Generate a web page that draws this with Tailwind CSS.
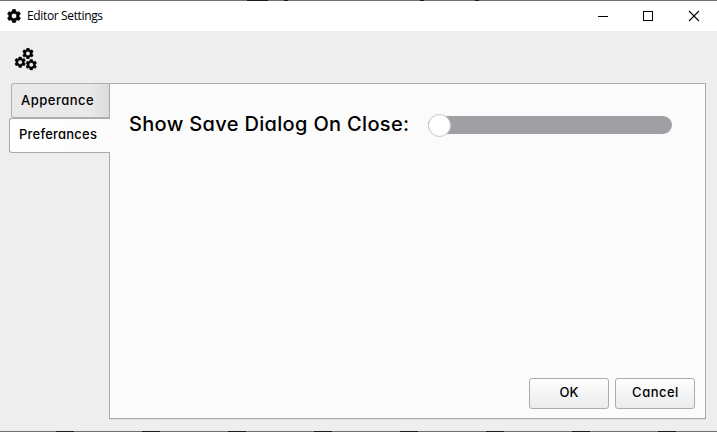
<!DOCTYPE html>
<html lang="en">
<head>
<meta charset="utf-8">
<title>Editor Settings</title>
<script src="https://cdn.jsdelivr.net/npm/@tailwindcss/browser@4"></script>
</head>
<body class="w-[717px] h-[432px] overflow-hidden bg-[#eeeeee] text-black font-['Inter','Liberation_Sans',sans-serif] [font-feature-settings:'cv11']">
<svg class="hidden"><defs>
  <symbol id="gear" viewBox="0 0 24 24"><path fill-rule="evenodd" stroke="currentColor" stroke-width="1.2" stroke-linejoin="round" fill="currentColor" d="M9.500 1h5l.7 3.200 2.200 1.300 3.200-1 2.400 4.200-2.400 2.200v2.200l2.400 2.200-2.400 4.200-3.200-1-2.200 1.300-.7 3.200h-5l-.7-3.200-2.200-1.300-3.200 1L1 15.300l2.400-2.200v-2.200L1 8.700l2.400-4.200 3.200 1 2.200-1.300zM12 7.300a4.700 4.700 0 1 0 0 9.400 4.700 4.700 0 0 0 0-9.400z"/></symbol>
</defs></svg>
<div class="flex flex-col w-full h-full">
  <div class="h-px shrink-0 flex bg-[#707070]">
    <span class="w-[21px] h-px bg-[#201a1c] ml-[247px]"></span><span class="w-1 h-px bg-[#201a1c] ml-4"></span><span class="w-1 h-px bg-[#201a1c] ml-[132px]"></span><span class="w-1 h-px bg-[#201a1c] ml-[51px]"></span>
  </div>
  <header class="h-[30px] shrink-0 bg-white flex items-center">
    <svg class="w-[14px] h-[14px] ml-[7px] -mt-px overflow-visible"><use href="#gear"/></svg>
    <span class="ml-[6px] text-[12px] leading-4 tracking-[-0.36px] font-['Open_Sans',sans-serif]">Editor Settings</span>
    <div class="ml-auto flex items-center mr-[17px] gap-[34px]">
      <svg class="w-3 h-3" fill="none" stroke="#000" shape-rendering="crispEdges"><path d="M1 6.500h10"/></svg>
      <svg class="w-3 h-3 -ml-px" fill="none" stroke="#000" shape-rendering="crispEdges"><path d="M1.500 1.500h9v9h-9z"/></svg>
      <svg class="w-3 h-3" fill="none" stroke="#000" stroke-width="1.1"><path d="M1 1l10 10M11 1l-10 10"/></svg>
    </div>
  </header>
  <div class="h-[52px] shrink-0 pt-4 pl-[14px]">
    <svg class="w-6 h-6" viewBox="0 0 24 24"><use href="#gear" x="8.200" y="0.700" width="11.500" height="11.500"/><use href="#gear" x="0.400" y="9.400" width="11.500" height="11.500"/><use href="#gear" x="11.500" y="12" width="11.500" height="11.500"/></svg>
  </div>
  <main class="h-[336px] shrink-0 flex pr-[11px]">
    <nav class="w-[109px] shrink-0 flex flex-col items-end text-[13px] font-medium">
      <div class="w-[98px] h-[35px] border border-r-0 border-[#b0b0b0] rounded-l-[3px] bg-linear-to-r from-[#e9e9e9] from-80% to-[#dcdcdc] pl-[9px] leading-[33px]"><span class="tracking-[0.5px]">Apperance</span></div>
      <div class="relative w-[101px] -mr-px h-[35px] border border-r-0 border-[#a9a9a9] rounded-l-[3px] bg-linear-to-r from-white to-[#fbfbfb] pl-[9px] leading-[31px]"><span class="tracking-[0.22px]">Preferances</span></div>
    </nav>
    <section class="w-[597px] border border-[#a9a9a9] bg-[#fbfbfb] flex flex-col shadow-[0_1px_0_#dedede]">
      <div class="flex items-center mt-[29px] h-6 pl-[19px]">
        <span class="w-[299px] whitespace-nowrap text-[20px] leading-6 -mt-[2px] font-medium tracking-[0.33px]">Show Save Dialog On Close:</span>
        <div class="w-[244px] h-[18px] rounded-full bg-[#a09fa3] flex items-center">
          <span class="w-[23px] h-[23px] -ml-[0.5px] shrink-0 rounded-full bg-white border border-[#c8c8c8]"></span>
        </div>
      </div>
      <div class="mt-auto flex justify-end gap-[6px] pr-[10px] pb-[9px] text-[13px] font-medium">
        <button class="w-[80px] h-[31px] border border-[#ababab] rounded-[3px] bg-linear-to-b from-white to-[#ebebeb] pb-[2px]">OK</button>
        <button class="w-[80px] h-[31px] border border-[#ababab] rounded-[3px] bg-linear-to-b from-white to-[#ebebeb] pb-[2px] pl-px tracking-[0.5px]">Cancel</button>
      </div>
    </section>
  </main>
  <div class="mt-auto h-px shrink-0 flex gap-[68px] pl-14 bg-[#707070]">
    <span class="w-[18px] h-px shrink-0 bg-[#1a1a1a]"></span><span class="w-[18px] h-px shrink-0 bg-[#1a1a1a]"></span><span class="w-[18px] h-px shrink-0 bg-[#1a1a1a]"></span><span class="w-[18px] h-px shrink-0 bg-[#1a1a1a]"></span><span class="w-[18px] h-px shrink-0 bg-[#1a1a1a]"></span><span class="w-[18px] h-px shrink-0 bg-[#1a1a1a]"></span><span class="w-[18px] h-px shrink-0 bg-[#1a1a1a]"></span><span class="w-[18px] h-px shrink-0 bg-[#1a1a1a]"></span>
  </div>
</div>
</body>
</html>
